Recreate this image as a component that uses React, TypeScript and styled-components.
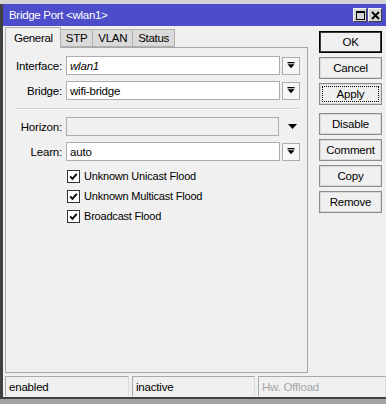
import styled, { createGlobalStyle } from "styled-components"

const GlobalStyle = createGlobalStyle`
  html, body {
    margin: 0;
    padding: 0;
    background: #a2a2a2;
  }
  body {
    font-family: "Liberation Sans", Arial, sans-serif;
    font-size: 11px;
    letter-spacing: -0.2px;
    color: #000;
  }
`

const DropIcon = () => (
  <svg width="8" height="7" viewBox="0 0 8 7">
    <rect x="0.5" y="0" width="7" height="1.3" fill="#000" />
    <polygon points="0.5,2.3 7.5,2.3 4,6.3" fill="#000" />
  </svg>
)

const CheckIcon = () => (
  <svg width="9" height="9" viewBox="0 0 9 9">
    <polyline points="1.2,4.4 3.4,6.8 7.8,1.8" fill="none" stroke="#000" strokeWidth="1.8" />
  </svg>
)

function Field({ label, value, italic, disabled }: { label: string; value?: string; italic?: boolean; disabled?: boolean }) {
  return (
    <FormRow>
      <Label>{label}</Label>
      <TextBox $disabled={disabled} $italic={italic}>{value}</TextBox>
      {disabled ? (
        <ArrowSlot>
          <svg width="9" height="5" viewBox="0 0 9 5">
            <polygon points="0,0 9,0 4.5,5" fill="#000" />
          </svg>
        </ArrowSlot>
      ) : (
        <DropButton>
          <DropIcon />
        </DropButton>
      )}
    </FormRow>
  )
}

function Check({ text }: { text: string }) {
  return (
    <CheckRow>
      <Box>
        <CheckIcon />
      </Box>
      <span>{text}</span>
    </CheckRow>
  )
}

export default function App() {
  return (
    <>
      <GlobalStyle />
      <Page>
        <TopStrip />
        <Window>
          <TitleBar>
            <Title>Bridge Port &lt;wlan1&gt;</Title>
            <TitleButtons>
              <TitleButton>
                <svg width="9" height="9" viewBox="0 0 9 9">
                  <rect x="0.5" y="0.5" width="8" height="8" fill="none" stroke="#000" />
                  <rect x="0" y="0" width="9" height="2" fill="#000" />
                </svg>
              </TitleButton>
              <TitleButton>
                <svg width="9" height="9" viewBox="0 0 9 9">
                  <path d="M1 1 L8 8 M8 1 L1 8" stroke="#000" strokeWidth="1.8" />
                </svg>
              </TitleButton>
            </TitleButtons>
          </TitleBar>

          <Main>
            <LeftCol>
              <Tabs>
                <Tab $active>General</Tab>
                <Tab>STP</Tab>
                <Tab>VLAN</Tab>
                <Tab>Status</Tab>
              </Tabs>
              <Panel>
                <Field label="Interface:" value="wlan1" italic />
                <Field label="Bridge:" value="wifi-bridge" />
                <Separator />
                <Field label="Horizon:" disabled />
                <Field label="Learn:" value="auto" />
                <Checks>
                  <Check text="Unknown Unicast Flood" />
                  <Check text="Unknown Multicast Flood" />
                  <Check text="Broadcast Flood" />
                </Checks>
              </Panel>
            </LeftCol>

            <Buttons>
              <Button $default>OK</Button>
              <Button>Cancel</Button>
              <Button $focused>Apply</Button>
              <ButtonGap />
              <Button>Disable</Button>
              <Button>Comment</Button>
              <Button>Copy</Button>
              <Button>Remove</Button>
            </Buttons>
          </Main>

          <StatusBar>
            <StatusCell $w={124}>enabled</StatusCell>
            <StatusCell $w={123}>inactive</StatusCell>
            <StatusCell $w={128} $muted>Hw. Offload</StatusCell>
          </StatusBar>
        </Window>
      </Page>
    </>
  )
}

const Page = styled.div`
  width: 386px;
  height: 404px;
  display: flex;
  flex-direction: column;
  overflow: hidden;
`

const TopStrip = styled.div`
  height: 4px;
  background: #d4d4d4;
`

const Window = styled.div`
  height: 393px;
  background: #f0f0f0;
  border-left: 3px solid #404040;
  border-bottom: 2px solid #404040;
  display: flex;
  flex-direction: column;
`

const TitleBar = styled.div`
  height: 22px;
  background: #4d4dcb;
  display: flex;
  align-items: center;
  justify-content: space-between;
  padding: 0 4px 0 6px;
`

const Title = styled.span`
  color: #fff;
  font-size: 11.5px;
  letter-spacing: -0.3px;
`

const TitleButtons = styled.div`
  display: flex;
  gap: 1px;
`

const TitleButton = styled.div`
  width: 14px;
  height: 14px;
  box-sizing: border-box;
  background: #d6d6d6;
  border: 1px solid #f4f4f4;
  border-right-color: #404040;
  border-bottom-color: #404040;
  display: flex;
  align-items: center;
  justify-content: center;
`

const Main = styled.div`
  display: flex;
  padding: 1px 0 0 2px;
  height: 347px;
  box-sizing: border-box;
`

const LeftCol = styled.div`
  width: 303px;
  display: flex;
  flex-direction: column;
`

const Tabs = styled.div`
  display: flex;
  align-items: flex-end;
  height: 20px;
  position: relative;
  z-index: 1;
`

const Tab = styled.div<{ $active?: boolean }>`
  box-sizing: border-box;
  height: ${(p) => (p.$active ? "21px" : "18px")};
  padding: ${(p) => (p.$active ? "0 7px 1px 8px" : "0 5px 0 5px")};
  margin-bottom: ${(p) => (p.$active ? "-1px" : "0")};
  display: flex;
  align-items: center;
  font-size: 11.5px;
  letter-spacing: -0.3px;
  background: ${(p) => (p.$active ? "#f0f0f0" : "#dadada")};
  border: 1px solid #b0b0b0;
  border-bottom: ${(p) => (p.$active ? "none" : "1px solid #b0b0b0")};
  & + & {
    border-left: none;
  }
`

const Panel = styled.div`
  flex: 1;
  border: 1px solid #a8a8a8;
  padding: 8px 6px 0 0;
  display: flex;
  flex-direction: column;
`

const FormRow = styled.div`
  display: flex;
  align-items: center;
  height: 19px;
  margin-bottom: 6px;
`

const Label = styled.span`
  width: 60px;
  flex: none;
  box-sizing: border-box;
  text-align: right;
  padding-right: 4px;
  font-size: 11.5px;
`

const TextBox = styled.div<{ $disabled?: boolean; $italic?: boolean }>`
  width: 214px;
  height: 19px;
  box-sizing: border-box;
  border: 1px solid #acacac;
  background: ${(p) => (p.$disabled ? "#f0f0f0" : "#fff")};
  font-style: ${(p) => (p.$italic ? "italic" : "normal")};
  font-size: 11.5px;
  padding: 1px 0 0 3px;
  display: flex;
  align-items: center;
`

const DropButton = styled.div`
  width: 18px;
  height: 18px;
  box-sizing: border-box;
  margin-left: 2px;
  border: 1px solid #acacac;
  background: #f7f7f7;
  display: flex;
  align-items: center;
  justify-content: center;
`

const ArrowSlot = styled.div`
  width: 18px;
  margin-left: 4px;
  display: flex;
  justify-content: center;
`

const Separator = styled.div`
  height: 1px;
  background: #d2d2d2;
  border-bottom: 1px solid #fafafa;
  margin: 2px 0 7px 9px;
  width: 284px;
`

const Checks = styled.div`
  display: flex;
  flex-direction: column;
  padding-left: 61px;
  margin-top: -1px;
`

const CheckRow = styled.div`
  display: flex;
  align-items: center;
  height: 20px;
  gap: 4px;
`

const Box = styled.div`
  width: 13px;
  height: 13px;
  box-sizing: border-box;
  border: 1px solid #333;
  background: #fff;
  display: flex;
  align-items: center;
  justify-content: center;
`

const Buttons = styled.div`
  margin-left: 11px;
  padding-top: 4px;
  width: 63px;
  display: flex;
  flex-direction: column;
  gap: 4px;
`

const ButtonGap = styled.div`
  height: 2px;
  margin-bottom: -2px;
`

const Button = styled.div<{ $default?: boolean; $focused?: boolean }>`
  height: 22px;
  box-sizing: border-box;
  display: flex;
  align-items: center;
  justify-content: center;
  font-size: 11.5px;
  background: #f0f0f0;
  border: 1px solid ${(p) => (p.$default ? "#000" : "#8c8c8c")};
  box-shadow: inset 0 0 0 1px ${(p) => (p.$default ? "#3c3c3c" : "#dadada")};
  outline: ${(p) => (p.$focused ? "1px dotted #000" : "none")};
  outline-offset: -4px;
`

const StatusBar = styled.div`
  display: flex;
  gap: 3px;
  margin-top: 3px;
  padding-left: 2px;
  height: 20px;
`

const StatusCell = styled.div<{ $w: number; $muted?: boolean }>`
  width: ${(p) => p.$w}px;
  box-sizing: border-box;
  border-top: 1px solid #a8a8a8;
  border-left: 1px solid #a8a8a8;
  border-right: 1px solid #dcdcdc;
  padding: 1px 0 0 3px;
  display: flex;
  align-items: center;
  font-size: 11.5px;
  color: ${(p) => (p.$muted ? "#a6a6a6" : "#000")};
`
